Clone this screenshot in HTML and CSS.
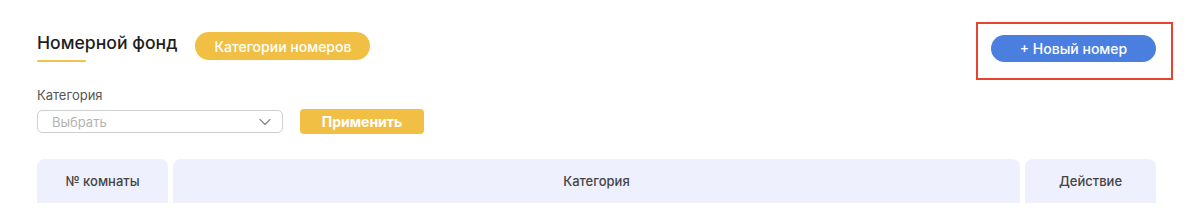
FILE: index.html
```html
<!DOCTYPE html>
<html lang="ru">
<head>
  <meta charset="UTF-8" />
  <meta name="viewport" content="width=device-width, initial-scale=1.0"/>
  <title>Номерной фонд</title>
  <link rel="stylesheet" href="styles.css">
</head>
<body>
  <div class="page">

    <!-- Шапка -->
    <div class="header">
      <div class="header-left">
        <div class="title-block">
          <h1 class="title">Номерной фонд</h1>
          <div class="title-line"></div>
        </div>
        <button class="pill">Категории номеров</button>
      </div>
      <div class="new-wrap">
        <button class="btn-new">+ Новый номер</button>
      </div>
    </div>

    <!-- Фильтр -->
    <div class="filter">
      <div class="filter-label">Категория</div>
      <div class="filter-row">
        <div class="select">
          <span class="select-text">Выбрать</span>
          <svg class="chevron" width="12" height="8" viewBox="0 0 12 8">
            <path d="M1 1.5 L6 6.5 L11 1.5" fill="none" stroke="#8a8a8a" stroke-width="1.3" stroke-linecap="round" stroke-linejoin="round"/>
          </svg>
        </div>
        <button class="btn-apply">Применить</button>
      </div>
    </div>

    <!-- Таблица -->
    <div class="table-head">
      <div class="th th-num">№ комнаты</div>
      <div class="th th-cat">Категория</div>
      <div class="th th-act">Действие</div>
    </div>

  </div>
</body>
</html>
```

FILE: styles.css
```css
body {
  margin: 0;
  background: #fff;
  font-family: Inter, "Noto Sans", sans-serif;
  color: #222;
}

.page {
  padding: 31px 44px 0 37px;
}

.header {
  display: flex;
  justify-content: space-between;
  align-items: flex-start;
}

.header-left {
  display: flex;
  align-items: flex-start;
  gap: 18px;
}

.title {
  margin: 0;
  font-size: 17.6px;
  line-height: 24px;
  font-weight: 500;
  color: #1e1e1e;
}

.title-line {
  width: 49px;
  height: 2px;
  margin-top: 5px;
  background: #f2c14e;
  border-radius: 1px;
}

.pill {
  margin-top: 1px;
  height: 28px;
  padding: 0 19px;
  border: none;
  border-radius: 14px;
  background: #f2bf45;
  color: #fff;
  font-family: inherit;
  font-size: 14px;
  font-weight: 500;
}

.new-wrap {
  position: relative;
  margin-top: 4px;
}

/* рамка-выделение вокруг кнопки */
.new-wrap::after {
  content: "";
  position: absolute;
  top: -13px;
  left: -15px;
  right: -17px;
  bottom: -18px;
  border: 2px solid #e8432e;
}

.btn-new {
  display: block;
  width: 165px;
  height: 27px;
  border: none;
  border-radius: 14px;
  background: #4a7fe0;
  color: #fff;
  font-family: inherit;
  font-size: 14px;
  font-weight: 500;
}

.filter {
  margin-top: 25px;
}

.filter-label {
  font-size: 13px;
  line-height: 16px;
  color: #555;
}

.filter-row {
  display: flex;
  align-items: center;
  gap: 17px;
  margin-top: 6px;
}

.select {
  width: 246px;
  height: 23px;
  box-sizing: border-box;
  border: 1px solid #cfcfcf;
  border-radius: 5px;
  display: flex;
  align-items: center;
  justify-content: space-between;
  padding: 0 11px 0 14px;
}

.select-text {
  font-size: 13px;
  color: #b3b3b3;
}

.btn-apply {
  width: 124px;
  height: 25px;
  border: none;
  border-radius: 4px;
  background: #f2bf45;
  color: #fff;
  font-family: inherit;
  font-size: 14px;
  font-weight: 700;
}

.table-head {
  display: flex;
  gap: 5px;
  margin-top: 25px;
}

.th {
  height: 44px;
  background: #eef0fd;
  border-radius: 8px 8px 0 0;
  display: flex;
  align-items: center;
  justify-content: center;
  font-size: 13px;
  font-weight: 500;
  color: #444;
}

.th-num {
  width: 131px;
}

.th-cat {
  flex: 1;
}

.th-act {
  width: 131px;
}
```
